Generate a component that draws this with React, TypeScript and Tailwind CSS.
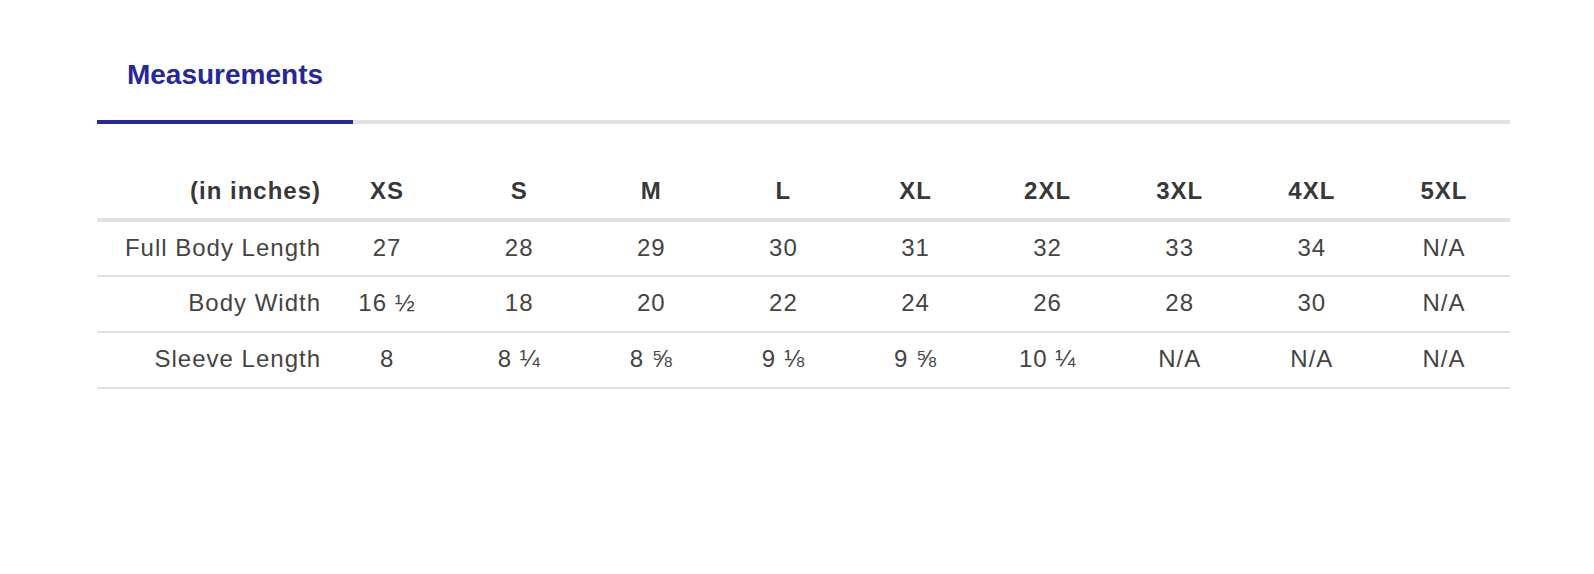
import React from "react";

const sizes = ["XS", "S", "M", "L", "XL", "2XL", "3XL", "4XL", "5XL"];
const rows: { label: string; values: string[]; h: string }[] = [
  { label: "Full Body Length", values: ["27", "28", "29", "30", "31", "32", "33", "34", "N/A"], h: "h-[55px]" },
  { label: "Body Width", values: ["16 ½", "18", "20", "22", "24", "26", "28", "30", "N/A"], h: "h-[56px]" },
  { label: "Sleeve Length", values: ["8", "8 ¼", "8 ⅝", "9 ⅛", "9 ⅝", "10 ¼", "N/A", "N/A", "N/A"], h: "h-[56px]" },
];

export default function App() {
  return (
    <div
      className="w-[1594px] h-[574px] bg-white"
      style={{ fontFamily: '"Liberation Sans", Arial, Helvetica, sans-serif' }}
    >
      <div className="ml-[97px] w-[1413px] pt-[59px]">
        <div className="flex border-b-4 border-[#e1e1e4]">
          <div className="w-[256px] -mb-[4px] border-b-4 border-[#27279c] pb-[29px] text-center text-[28px] leading-[32px] font-bold text-[#27279c]">
            Measurements
          </div>
        </div>

        <div className="mt-[40px]">
          <div className="grid grid-cols-[224px_repeat(9,1fr)] h-[58px] border-b-4 border-[#e1e1e4] items-center text-[24px] font-bold text-[#383838] tracking-[1px]">
            <div className="text-right">(in inches)</div>
            {sizes.map((s) => (
              <div key={s} className="text-center">
                {s}
              </div>
            ))}
          </div>
          {rows.map((r) => (
            <div
              key={r.label}
              className={`grid grid-cols-[224px_repeat(9,1fr)] ${r.h} pb-[2px] border-b-2 border-[#e1e1e4] items-center text-[24px] text-[#444444] tracking-[1px]`}
            >
              <div className="text-right">{r.label}</div>
              {r.values.map((v, i) => (
                <div key={i} className="text-center">
                  {v}
                </div>
              ))}
            </div>
          ))}
        </div>
      </div>
    </div>
  );
}
